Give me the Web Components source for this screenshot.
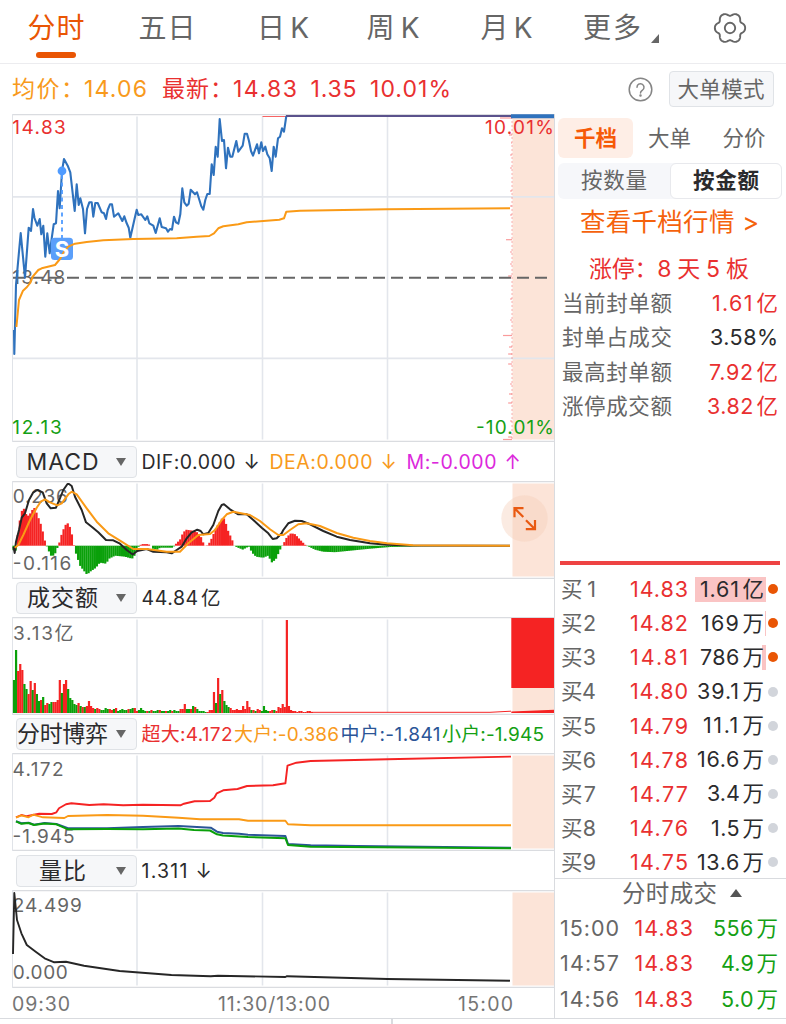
<!DOCTYPE html>
<html lang="zh-CN">
<head>
<meta charset="utf-8">
<title>分时</title>
<style>
  :root {
    --up: #e93030;
    --down: #14a014;
    --accent: #e95504;
    --avg: #f89a1c;
    --text: #2b2b2d;
    --muted: #666;
    --line: #d9dbdf;
  }
  body {
    margin: 0;
    background: #fff;
    color: var(--text);
    font-family: Inter, "Noto Sans CJK SC", sans-serif;
    line-height: 1.4;
  }
</style>
</head>
<body>
<stock-page></stock-page>

<script>
/**
 * <fit-text w="62">14.06</fit-text>
 * One line of text, tracked so that it fills exactly w pixels.
 */
class FitText extends HTMLElement {
  connectedCallback() {
    var text = this.textContent;
    this.attachShadow({ mode: 'open' });
    this.shadowRoot.innerHTML = `
      <style>
        :host { display: inline-block; white-space: nowrap; text-align: left; flex-shrink: 0; }
        i { font-style: normal; margin-left: 0.12em; }
      </style>
      <span>${text.replace(/>/g, '&gt;').replace(/(\d)([万亿])$/, '$1<i>$2</i>')}</span>
    `;
    var w = parseFloat(this.getAttribute('w'));
    if (!w) return;
    this.style.width = w + 'px';
    var span = this.shadowRoot.querySelector('span');
    var natural = span.getBoundingClientRect().width;
    span.style.letterSpacing = (w - natural) / Math.max(1, text.length - 1) + 'px';
  }
}

class PeriodTabs extends HTMLElement {
  connectedCallback() {
    // six-lobed gear outline
    var pts = [];
    for (var a = 0; a < 360; a += 3) {
      var t = a * Math.PI / 180;
      var r = 13.9 + 1.5 * Math.cos(6 * t) - 0.25 * Math.cos(12 * t);
      pts.push((17 + r * Math.cos(t)).toFixed(2) + ' ' + (17 + r * Math.sin(t)).toFixed(2));
    }
    this.attachShadow({ mode: 'open' });
    this.shadowRoot.innerHTML = `
      <style>
        :host {
          display: grid;
          grid-template-columns: 112px 110px 122px 98px 129px 102px 113px;
          box-sizing: border-box;
          height: 64px;
          border-bottom: 1px solid #ececef;
          font-size: 28px;
          line-height: 56px;
          color: var(--muted);
        }
        .tab { text-align: center; height: 56px; }
        .tab.active { color: var(--accent); }
        .tab.active::after {
          content: '';
          display: block;
          width: 40px;
          height: 6px;
          margin: -4px auto 0;
          border-radius: 3px;
          background: var(--accent);
        }
        .more { display: flex; padding-left: 12px; gap: 10px; align-items: flex-start; }
        .more svg { margin-top: 34px; }
        .gear { display: flex; justify-content: center; padding-top: 10.5px; }
      </style>
      <div class="tab active"><fit-text w="57">分时</fit-text></div>
      <div class="tab"><fit-text w="57">五日</fit-text></div>
      <div class="tab"><fit-text w="52">日K</fit-text></div>
      <div class="tab"><fit-text w="53">周K</fit-text></div>
      <div class="tab"><fit-text w="52">月K</fit-text></div>
      <div class="more"><fit-text w="58">更多</fit-text><svg width="8" height="9"><path d="M8 0V9H0z" fill="#666"/></svg></div>
      <div class="gear"><svg width="34" height="34" fill="none" stroke="#666" stroke-width="1.9" stroke-linejoin="round">
        <path d="M${pts.join('L')}z"/><circle cx="17" cy="17" r="5.2"/></svg></div>
    `;
  }
}

class QuoteBar extends HTMLElement {
  connectedCallback() {
    this.attachShadow({ mode: 'open' });
    this.shadowRoot.innerHTML = `
      <style>
        :host {
          display: flex;
          align-items: center;
          height: 50px;
          padding: 0 12.5px 0 12px;
          font-size: 23px;
          color: var(--up);
        }
        .avg { color: var(--avg); display: flex; margin-right: 15px; }
        .now { display: flex; gap: 13.5px; }
        .now span { display: flex; }
        .help { margin-left: auto; margin-right: 15.5px; }
        .mode {
          box-sizing: border-box;
          width: 105px;
          height: 36px;
          border: 1.5px solid #e0e3e7;
          border-radius: 4px;
          background: #f6f7f9;
          color: var(--muted);
          font-size: 21.5px;
          line-height: 34px;
          text-align: center;
        }
      </style>
      <div class="avg"><fit-text w="72">均价：</fit-text><fit-text w="63">14.06</fit-text></div>
      <div class="now">
        <span><fit-text w="71">最新：</fit-text><fit-text w="64">14.83</fit-text></span>
        <fit-text w="46">1.35</fit-text>
        <fit-text w="81">10.01%</fit-text>
      </div>
      <svg class="help" width="25" height="25" fill="none" stroke="#858585" stroke-width="1.5" stroke-linecap="round">
        <circle cx="12.5" cy="12.5" r="11.3"/>
        <path d="M9 10.2a3.5 3.5 0 1 1 5.6 2.8c-1.3 1-2.1 1.4-2.1 3"/>
        <circle cx="12.5" cy="18.6" r="0.5" fill="#858585"/>
      </svg>
      <div class="mode"><fit-text w="87">大单模式</fit-text></div>
    `;
  }
}

/** Header of a sub chart: indicator picker and, in the slot, its values. */
class IndicatorBar extends HTMLElement {
  connectedCallback() {
    this.attachShadow({ mode: 'open' });
    this.shadowRoot.innerHTML = `
      <style>
        :host { display: flex; align-items: center; box-sizing: border-box; padding-left: 4px; font-size: 19.5px; }
        .pick {
          box-sizing: border-box;
          display: grid;
          grid-template-columns: 91px 8px 20px;
          align-items: center;
          width: 121px;
          height: 32px;
          margin-right: 4.5px;
          border: 1.5px solid #dfe2e6;
          border-radius: 4px;
          background: #f6f7f9;
          font-size: 23px;
          line-height: 30px;
        }
        .pick div { display: flex; justify-content: center; }
        .pick svg { grid-column: 3; }
        ::slotted(*) { margin-top: 2px; margin-right: var(--gap, 8px); }
      </style>
      <div class="pick">
        <div><fit-text w="${this.getAttribute('name-width')}">${this.getAttribute('name')}</fit-text></div>
        <svg width="10" height="8"><path d="M0 0H10L5 8z" fill="#666"/></svg>
      </div>
      <slot></slot>
    `;
  }
}

var RED = '#f52323', GREEN = '#0aa00a', ORANGE = '#fa9a16', BLUE = '#2f72bd', BLACK = '#262626';
var GRID_X = [137, 262.5, 387.5];
var BASE = 545.7;

var price = '14 330 14.3 354 16 285 20.7 233 25 277.7 28.7 227.7 31 231 33 209 34.5 218 37.3 225.7 39.7 219 41.3 234.3 43.3 225.7 45.3 256.7 47.3 233.3 49.7 253.3 51.7 238.3 53.7 224.3 56 223.3 58 191 59.7 208.3 62 171 64 159 67.7 165.7 70.3 172.3 74.7 211 76.7 184.3 78.7 205 80.3 198.3 83 209 85 233.3 87 209 89.3 202.3 91.7 202.3 93.3 216.7 95.3 203 97.7 203 101.7 212.3 104 213.3 106 219 107.7 210 110 204.3 112 204.3 114 216.7 118.3 213.3 122.3 221 124.3 216.3 126.7 223.3 128.7 227.7 130.3 237.7 134.7 218.3 136.7 209.7 138.3 215 141.3 214.3 145.3 220 147.3 216.3 149.3 223.3 153.3 225.7 155.7 233 159.7 218.3 161.7 227 166 228.3 168 231.7 170 229 172 229.7 174 216.7 176 222.3 178.3 223.7 180.3 214.3 182.3 188.3 184.3 202.3 186.7 205.7 188.7 203.7 190.7 189.7 195 194.3 197 192.3 201.3 206.3 203.3 209.7 205.3 200 207.3 194 209.7 194 211.7 164.3 213.7 175 215.7 146.7 217.7 156.7 219.7 119 222 141 224 140 226 168.3 228 147.7 230.3 156.7 232.3 156.7 236.3 141 238.3 151.7 242.7 145.7 244.7 133.7 247 133.7 249 141 251 151 253 155.7 257 144.3 259 153.3 261.3 142.3 263 151 265.3 146.7 267.3 154.3 269.7 158.3 271.7 171 273.7 146.7 275.7 156.7 278 138.3 280 136.7 282 128.3 284 131.7 286.3 116';
var average = '16.4 327 19 300 23 290.7 27 287 30.4 282.7 32.7 276.7 38.3 270 41.7 268.3 55 265 60 259 64 251.7 68.3 246.7 75 243.7 86.7 242 103.3 240.3 133.3 239 176.7 238.3 196.7 236.7 209.3 236 214 233.3 218.3 228.3 223.3 226.3 238.3 224.3 246.7 222.3 263.3 221 279.3 219.7 284 218.3 286.3 211.7 300 210.7 387 209.3 510 208.2';
var dif = '13.5 547 14.7 553 16 541.7 19 530 21.7 517.7 25 513.3 29 500 33.3 492.3 37.3 490 42.7 492.3 46.7 503.3 50.7 508.3 56 507.7 59.3 500 63.3 490 67.5 484 69 484 71.7 486 75 496.7 81.7 510 86 522.3 91.7 526.7 98.3 532.3 106 540 113.3 540.3 120 543.7 126.7 550 132.7 554.5 137.3 551 146.7 549 153.3 551.7 166.7 552.3 171.7 553.3 176.7 550 181.7 546.7 186.7 538.3 191.7 532.3 197.3 529.7 200.7 531 203.3 534.3 208.3 533 213.3 525 218.3 511 221.7 505 224 504.3 230 509.3 238.3 514.3 246.7 514.3 253.3 520 261.7 527.7 268.3 533.3 272.7 539 276.7 538.3 281.7 533.3 283.3 530 288.3 523.3 295 520.7 301.7 521 310 524.3 323.3 531 336.7 536.7 350 540 370 543.3 387 544.7 410 545.5 510 545.7';
var dea = '14.7 547.7 18.3 545 23.3 535 30 520 36.7 507.7 40.7 501.7 45 499.3 50 502.3 57.3 505.3 61.7 503.3 68.3 494.3 71.7 491.7 76.7 494.3 86.7 508.3 96.7 521.7 108.3 533.3 120 540.7 133.3 549 146.7 549 166.7 551.7 180 551.7 188.3 543.3 198.3 535 210 534 215 530 221.7 520 226.7 514.3 233.3 511.7 250 515 260 521 270 529.3 278.3 535 283.3 535 290 530 298.3 524.3 306.7 523.3 320 526 336.7 533 353.3 537.7 370 541 387 543.3 413 545.3 510 545.7';
// x, signed height of the MACD histogram
var hist = [12,-1, 13,-3, 15,-9, 16.3,0, 17,6, 19,20, 21,34, 24,37, 27,29, 30,32, 33,37, 35,38, 37,31, 40,24, 43,13, 45,4, 46.5,0, 48,-3, 50,-9, 52,-11, 55,-8, 57,-3, 58,0, 59,2, 62,13, 65,20, 67,23, 69,21, 71,15, 73,6, 74,0, 75,-5, 77,-11, 80,-20, 83,-24, 87,-29, 90,-26, 93,-24, 96,-22, 98,-19, 100,-17, 106,-18, 109,-13, 115,-10, 125,-11, 132,-13, 136,-8, 137,-2, 140,0, 141,1.6, 148,1.6, 151,0, 153,-3, 157,-4, 160,-2, 173,-2, 175,1, 180,6, 183,13, 186,16, 193,15, 198,13, 202,7, 204,0, 208,0.5, 212,8, 216,18, 220,24, 223,29, 225,25, 228,15, 232,6, 234,0, 238,-2, 243,-4, 246,-2, 249,-1, 252,-7, 256,-11, 263,-12, 268,-10, 272,-17, 276,-13, 280,-4, 283,1, 287,9, 291,12.5, 295,11.5, 300,6, 306,0, 309,-1, 315,-4, 323,-6, 335,-6.5, 350,-5, 370,-3, 390,-1.3, 420,-0.5, 511,0];
// one entry a minute from the open
var volume = 'g33 g63 r42 r49 r43 g29 g24 r19 r32 g23 r30 g19 g12 r13 g16 r8 r10 g9 g11 r11 r11 r13 r33 g20 r29 r33 g24 g15 g13 g9 g8 r10 g7 r6 g6 r7 r12 r7 r5 g4 r5 r4 g3 g3 g5 g4 r4 r3 g4 r5 g2 g3 g4 g3 g3 r4 g4 g5 r5 r2 g3 g5 g3 g2 r2 g2 r3 g2 g2 g3 r3 g2 g2 r2 g2 g3 r2 g3 g2 g2 r4 r4 r9 g4 g4 r4 g7 r6 g4 g2 g2 g2 g1 r1 r3 r3 r21 g10 r35 g19 r23 g12 g8 g6 r5 r3 r3 r4 r3 r3 r7 r4 r12 r6 g3 r3 g2 r4 r3 g2 g7 g3 g2 r2 r3 g3 r2 r6 r5 r9 r6 r93 r7 r3 r2 r2 r1 r2 r2 r1 r1 r2 r2 r1'.split(' ');
var superBig = '16 817.3 21.4 815 26.8 816.3 34 814.7 39.3 813.7 51.8 814 56.4 812.3 59 808.3 66 804.3 71.4 803.3 89.3 805 103.6 804.3 123.2 805.3 142.9 804.7 180.4 805.3 184 803.7 194.6 801.3 210 801 214.3 797.7 216.8 793.3 223.2 790.3 237.5 789 247 786 273 785.3 285.4 783.3 287.5 765.7 296.4 762.7 310.7 761 387.5 759.3 511 756.6';
var big = '16 817.7 21.4 815.3 28.6 817.3 33 814.7 43 817.3 64.3 818 68 816 107 815 143 815.7 178.6 817.7 200 819.3 239 819.3 248 820.7 285.4 820.7 288 824.3 310.7 825.3 511 825.3';
var mid = '16 821.3 21.4 823.3 28.6 822.7 34 824.7 44.6 823 56.4 824 68 828.3 107 828.3 143 827 178.6 826 210.7 827.7 217 831.7 223 833 239 833.7 248 834.7 285.4 836 288 844 310.7 845.3 357 846 511 847.7';
var small = '16 821.3 21.4 823.8 28.6 823 34 825 44.6 823.5 56.4 824.3 68 829.3 107 829 143 829.3 178.6 828.6 194 830 210 830.5 217 834.3 223 835.5 248 837 285.4 838.2 288 845 310.7 846.8 511 848.2';
var ratio = '13 954 14.3 893 17 920 21.4 933.3 26.8 945 35.7 951.7 44.6 958.3 54.3 962.3 66 961.7 84 965.7 119.6 971 171.4 975 210.7 976.3 218 975.7 285.4 977 287 976.2 387.5 979 510 980.7';

function line(pts, color, width) {
  return `<polyline points="${pts}" fill="none" stroke="${color}" stroke-width="${width || 2}" stroke-linejoin="round"/>`;
}

function label(x, y, w, text, color) {
  return `<text x="${x}" y="${y}" textLength="${w}" fill="${color || '#666'}">${text}</text>`;
}

function histogramBars() {
  var out = '';
  for (var i = 0; i < 240; i++) {
    var x = 13.5 + i * 2.083;
    for (var k = 0; k < hist.length - 4 && hist[k + 2] < x; k += 2);
    var t = (x - hist[k]) / (hist[k + 2] - hist[k]);
    var h = hist[k + 1] + (hist[k + 3] - hist[k + 1]) * t;
    out += `<rect x="${(x - 1.04).toFixed(2)}" y="${(h > 0 ? BASE - h : BASE).toFixed(2)}" width="2.25" height="${Math.abs(h).toFixed(2)}" fill="${h > 0 ? RED : GREEN}"/>`;
  }
  return out;
}

function volumeBars() {
  return volume.map((v, i) => {
    var h = +v.slice(1);
    return `<rect x="${(12.9 + i * 2.083).toFixed(2)}" y="${713 - h}" width="2.2" height="${h}" fill="${v[0] === 'r' ? RED : GREEN}"/>`;
  }).join('');
}

function priceTicks() {
  // y, length
  var ticks = [[118, 12], [135, 3], [143, 1], [155, 2], [168, 2], [191, 2], [206, 2], [215, 2], [239.7, 6], [252, 2], [264, 2], [276, 4], [299, 2], [320, 2], [335.5, 9], [347, 3], [354, 4], [364, 4], [384, 2], [394, 3], [403, 4], [421, 2], [437, 4], [439.5, 9]];
  return ticks.map(t => `<path d="M${512 - t[1]} ${t[0]}H512"/>`).join('');
}

var CHARTS = {
  price: () => `
    <path d="M13 196.8H554M13 358.3H554" stroke="#e3e6ec" stroke-width="1.8"/>
    <path d="M262.5 116.5H511" stroke="${RED}" stroke-width="1" opacity="0.7"/>
    <path d="M512 117V440" stroke="${RED}" stroke-width="1" stroke-dasharray="2 2" opacity="0.35"/>
    <g stroke="${RED}" stroke-width="1.2" opacity="0.45">${priceTicks()}</g>
    ${label(12.3, 133.5, 53.5, '14.83', '#e93030')}${label(485, 133.5, 69, '10.01%', '#e93030')}
    ${label(12.3, 283.5, 53, '13.48')}
    ${label(12.3, 434, 49.5, '12.13', '#14a014')}${label(476, 434, 78, '-10.01%', '#14a014')}
    <path d="M13 277.8H553" stroke="#666" stroke-width="2" stroke-dasharray="12 6"/>
    ${line(price, BLUE, 2.1)}
    <path d="M286 116H511" stroke="#5b528c" stroke-width="1.8"/>
    <path d="M511 116.2H554" stroke="${BLUE}" stroke-width="4"/>
    <path d="M62 175V238" stroke="#4f9bff" stroke-width="1.8" stroke-dasharray="4 3.5"/>
    <circle cx="62" cy="171" r="4.4" fill="#4f9bff"/>
    <rect x="51" y="237.7" width="22" height="22.3" rx="3.5" fill="#5b9ffa"/>
    ${line(average, ORANGE)}
    <text x="62" y="256.7" text-anchor="middle" font-size="22" font-weight="700" fill="#fff">S</text>`,
  macd: () => `
    ${label(12.8, 502.8, 55, '0.236')}${label(12.8, 570, 58.5, '-0.116')}
    ${histogramBars()}${line(dif, BLACK)}${line(dea, ORANGE)}`,
  volume: () => `
    ${label(13, 640, 40, '3.13')}<text x="54.5" y="640">亿</text>
    ${volumeBars()}
    <path d="M310 712.3H490L511 711.2" fill="none" stroke="${RED}" stroke-width="1"/>
    <rect x="511.3" y="618" width="42.7" height="70" fill="${RED}"/>
    <path d="M511.3 713V711.5L554 709.8V713z" fill="${RED}"/>`,
  flow: () => `
    ${label(12.5, 776, 51, '4.172')}${label(12.5, 842.5, 62, '-1.945')}
    ${line(superBig, RED, 1.9)}${line(big, ORANGE, 1.9)}${line(mid, '#2b5597', 2)}${line(small, GREEN, 2)}`,
  ratio: () => `
    ${label(12.8, 911.7, 69, '24.499')}${label(12.8, 978.7, 55, '0.000')}
    ${line(ratio, BLACK, 1.9)}`
};

/** <trend-chart kind="macd" top="481" height="98">: one plot, drawn in page units. */
class TrendChart extends HTMLElement {
  connectedCallback() {
    var top = +this.getAttribute('top');
    var h = +this.getAttribute('height');
    this.attachShadow({ mode: 'open' });
    this.shadowRoot.innerHTML = `
      <style>
        :host { display: block; height: ${h}px; }
        svg { display: block; font-size: 19px; fill: #666; }
      </style>
      <svg width="543" height="${h}" viewBox="12 ${top} 543 ${h}">
        <rect x="512.5" y="${top + 2.5}" width="41.5" height="${h - 5}" fill="#fce4d8"/>
        <path d="${GRID_X.map(x => `M${x} ${top + 2.5}V${top + h - 2.5}`).join('')}" stroke="#e3e6ec" stroke-width="1.6"/>
        <path d="M12 ${top + 0.6}H555M12 ${top + h - 0.7}H555" stroke="#dadce0" stroke-width="1.3"/>
        <path d="M12.5 ${top}V${top + h}" stroke="#e0e3e8"/>
        ${CHARTS[this.getAttribute('kind')]()}
      </svg>
    `;
  }
}

class ExpandButton extends HTMLElement {
  connectedCallback() {
    this.attachShadow({ mode: 'open' });
    this.shadowRoot.innerHTML = `
      <style>:host { display: block; width: 47px; height: 47px; } svg { display: block; }</style>
      <svg width="47" height="47" fill="none" stroke="#e95a12" stroke-width="2.2">
        <circle cx="23.5" cy="23.5" r="23.2" fill="#f6cfba" fill-opacity="0.42" stroke="none"/>
        <path d="M22.5 13.2H13.5V22.2M13.5 13.2L22.3 22M24.8 34.2H34V25M34 34.2L25 25.2"/>
      </svg>
    `;
  }
}

class ChartColumn extends HTMLElement {
  connectedCallback() {
    this.attachShadow({ mode: 'open' });
    this.shadowRoot.innerHTML = `
      <style>
        :host { display: block; position: relative; box-sizing: border-box; width: 555px; height: 904px; padding-left: 12px; border-right: 1px solid var(--line); }
        trend-chart { margin-right: -1px; }
        .dea { color: var(--avg); }
        .m { color: #dc28dc; }
        .up { color: var(--up); }
        .mid { color: #2b5597; }
        .down { color: var(--down); }
        .axis { display: grid; grid-template-columns: 206px 1fr auto; width: 501px; height: 30px; line-height: 32px; font-size: 19.5px; color: #757575; }
        expand-button { position: absolute; left: 501px; top: 381px; }
      </style>
      <trend-chart kind="price" top="114" height="328"></trend-chart>
      <indicator-bar name="MACD" name-width="72" style="height:39px">
        <fit-text w="94">DIF:0.000</fit-text><fit-text w="18">↓</fit-text>
        <fit-text class="dea" w="103">DEA:0.000</fit-text><fit-text class="dea" w="18">↓</fit-text>
        <fit-text class="m" w="90">M:-0.000</fit-text><fit-text class="m" w="18">↑</fit-text>
      </indicator-bar>
      <trend-chart kind="macd" top="481" height="98"></trend-chart>
      <indicator-bar name="成交额" name-width="71" style="height:38px">
        <fit-text w="79">44.84亿</fit-text>
      </indicator-bar>
      <trend-chart kind="volume" top="617" height="98"></trend-chart>
      <indicator-bar name="分时博弈" name-width="91" style="height:38px;--gap:1.5px;font-size:19px">
        <fit-text class="up" w="91">超大:4.172</fit-text>
        <fit-text class="dea" w="105">大户:-0.386</fit-text>
        <fit-text class="mid" w="100">中户:-1.841</fit-text>
        <fit-text class="down" w="102">小户:-1.945</fit-text>
      </indicator-bar>
      <trend-chart kind="flow" top="753" height="98"></trend-chart>
      <indicator-bar name="量比" name-width="47" style="height:39px">
        <fit-text w="46">1.311</fit-text><fit-text w="18">↓</fit-text>
      </indicator-bar>
      <trend-chart kind="ratio" top="890" height="98"></trend-chart>
      <div class="axis">
        <fit-text w="58">09:30</fit-text><fit-text w="112">11:30/13:00</fit-text><fit-text w="55">15:00</fit-text>
      </div>
      <expand-button></expand-button>
    `;
  }
}

var LIMITS = [
  ['当前封单额', '1.61亿', 66], ['封单占成交', '3.58%', 68, 'plain'],
  ['最高封单额', '7.92亿', 69], ['涨停成交额', '3.82亿', 71]
];
// level, price, amount, amount width, share of the bar in px
var BIDS = [
  [1, '14.83', '1.61亿', 64, 71], [2, '14.82', '169万', 63, 1], [3, '14.81', '786万', 64, 4],
  [4, '14.80', '39.1万', 67, 0], [5, '14.79', '11.1万', 61, 0], [6, '14.78', '16.6万', 67, 0],
  [7, '14.77', '3.4万', 57, 0], [8, '14.76', '1.5万', 53, 0], [9, '14.75', '13.6万', 67, 0]
];
var TRADES = [['15:00', '14.83', '556万', 65], ['14:57', '14.83', '4.9万', 57], ['14:56', '14.83', '5.0万', 57]];

class OrderBook extends HTMLElement {
  connectedCallback() {
    this.attachShadow({ mode: 'open' });
    this.shadowRoot.innerHTML = `
      <style>
        :host { display: block; width: 231px; height: 904px; font-size: 21.5px; color: var(--muted); }
        .tabs { display: grid; grid-template-columns: 75px 73px 76px; height: 40px; padding: 4px 0 0 3px; line-height: 40px; text-align: center; }
        .tabs .on { border-radius: 6px; background: #feeee6; color: #f65a08; font-weight: 700; }
        .seg { display: grid; grid-template-columns: 112px 112px; height: 36px; margin: 5px 4px 0 3px; border-radius: 6px; background: #f6f7fa; line-height: 35px; text-align: center; }
        .seg .on { box-sizing: border-box; border: 1.5px solid #e8e9ed; border-radius: 6px; background: #fff; color: var(--text); font-weight: 600; line-height: 33px; }
        .link { height: 48px; line-height: 45px; padding-left: 25px; font-size: 25.5px; color: #f5620c; }
        .streak { height: 39.3px; line-height: 44px; padding-left: 34px; font-size: 23px; color: var(--up); }
        .limit { display: flex; justify-content: space-between; height: 34.2px; line-height: 34.2px; padding: 0 8px 0 7px; }
        .limits { color: var(--up); }
        .limit fit-text:first-child { color: var(--muted); }
        .limit .plain { color: var(--text); }
        .total { height: 4px; margin: 138px 6px 7px 5px; background: #ee4343; }
        .bid { display: grid; grid-template-columns: 38px 90px 78px 1fr; align-items: center; height: 34.15px; padding-left: 5px; }
        .bid fit-text:first-child { padding-left: 1px; }
        .p { justify-self: end; color: var(--up); }
        .amt { box-sizing: border-box; display: flex; justify-content: flex-end; height: 25px; line-height: 25px; padding-right: 2px; color: var(--text); background: linear-gradient(#fac4c4, #fac4c4) right / var(--bar) 100% no-repeat; }
        .dot { width: 10px; height: 10px; margin-left: 2px; border-radius: 50%; background: #d2d5db; }
        .dot.hot { background: var(--accent); }
        .head { box-sizing: border-box; display: flex; align-items: center; height: 32px; margin-top: -1px; padding-left: 67px; gap: 13px; border-top: 1.5px solid var(--line); font-size: 23.5px; }
        .head svg { margin-top: -3px; }
        .trade { display: grid; grid-template-columns: 60px 73px 1fr; align-items: center; height: 35.4px; padding: 0 8px 0 5px; }
        .trade fit-text:last-child { justify-self: end; color: var(--down); }
      </style>
      <div class="tabs">
        <div class="on"><fit-text w="43">千档</fit-text></div>
        <div><fit-text w="43">大单</fit-text></div>
        <div><fit-text w="43">分价</fit-text></div>
      </div>
      <div class="seg">
        <div><fit-text w="66">按数量</fit-text></div>
        <div class="on"><fit-text w="66">按金额</fit-text></div>
      </div>
      <div class="link"><fit-text w="179">查看千档行情 ></fit-text></div>
      <div class="streak"><fit-text w="160">涨停：8 天 5 板</fit-text></div>
      <div class="limits">${LIMITS.map(r => `
        <div class="limit"><fit-text w="110">${r[0]}</fit-text><fit-text class="${r[3] || ''}" w="${r[2]}">${r[1]}</fit-text></div>`).join('')}
      </div>
      <div class="total"></div>
      ${BIDS.map(b => `
        <div class="bid">
          <fit-text w="35">买 ${b[0]}</fit-text>
          <fit-text class="p" w="58">${b[1]}</fit-text>
          <div class="amt" style="--bar:${b[4]}px"><fit-text w="${b[3]}">${b[2]}</fit-text></div>
          <div class="dot ${b[0] < 4 ? 'hot' : ''}"></div>
        </div>`).join('')}
      <div class="head"><fit-text w="95">分时成交</fit-text><svg width="12" height="8"><path d="M6 0L12 8H0z" fill="#555"/></svg></div>
      ${TRADES.map(t => `
        <div class="trade"><fit-text w="59">${t[0]}</fit-text><fit-text class="p" w="58.5">${t[1]}</fit-text><fit-text w="${t[3]}">${t[2]}</fit-text></div>`).join('')}
    `;
  }
}

class StockPage extends HTMLElement {
  connectedCallback() {
    this.attachShadow({ mode: 'open' });
    this.shadowRoot.innerHTML = `
      <style>
        :host { display: block; width: 786px; height: 1024px; overflow: hidden; }
        main { display: grid; grid-template-columns: 555px 231px; height: 904px; }
        footer { height: 6px; border-top: 1.5px solid var(--line); }
        footer::before { content: ''; display: block; width: 1.5px; height: 6px; margin-left: 391px; background: var(--line); }
      </style>
      <period-tabs></period-tabs>
      <quote-bar></quote-bar>
      <main><chart-column></chart-column><order-book></order-book></main>
      <footer></footer>
    `;
  }
}

customElements.define('fit-text', FitText);
customElements.define('period-tabs', PeriodTabs);
customElements.define('quote-bar', QuoteBar);
customElements.define('indicator-bar', IndicatorBar);
customElements.define('trend-chart', TrendChart);
customElements.define('expand-button', ExpandButton);
customElements.define('chart-column', ChartColumn);
customElements.define('order-book', OrderBook);
customElements.define('stock-page', StockPage);
</script>
</body>
</html>
